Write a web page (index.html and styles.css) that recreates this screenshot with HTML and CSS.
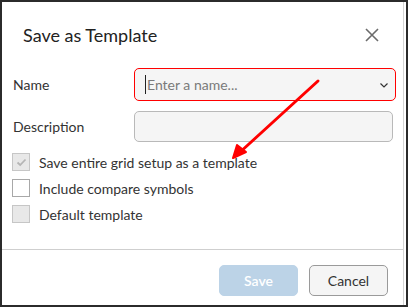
FILE: index.html
```html
<!DOCTYPE html>
<html lang="en">
<head>
    <meta charset="UTF-8">
    <title>Save as Template</title>
    <link rel="stylesheet" href="styles.css">
</head>
<body>

<div class="dialog">
    <div class="panel">
        <div class="header">
            <h2>Save as Template</h2>
            <button class="close" aria-label="Close">
                <svg width="14" height="14" viewBox="0 0 14 14"><path d="M1 1L13 13M13 1L1 13" stroke="#6b6b6b" stroke-width="1.6" fill="none"/></svg>
            </button>
        </div>

        <div class="form">
            <div class="form-row">
                <label>Name</label>
                <div class="select">
                    <span class="caret"></span>
                    <span class="placeholder">Enter a name...</span>
                    <svg class="chevron" width="8" height="5" viewBox="0 0 8 5"><path d="M0.5 0.5L4 4L7.5 0.5" stroke="#333" stroke-width="1.2" fill="none"/></svg>
                </div>
            </div>
            <div class="form-row">
                <label>Description</label>
                <input type="text" class="text-input">
            </div>
        </div>

        <div class="checks">
            <div class="check-row">
                <span class="box disabled">
                    <svg width="11" height="9" viewBox="0 0 11 9"><path d="M1.5 4.5L4.2 7L9.5 1.5" stroke="#b5b5b5" stroke-width="1.8" fill="none"/></svg>
                </span>
                <span>Save entire grid setup as a template</span>
            </div>
            <div class="check-row">
                <span class="box"></span>
                <span>Include compare symbols</span>
            </div>
            <div class="check-row">
                <span class="box disabled"></span>
                <span>Default template</span>
            </div>
        </div>

        <div class="footer">
            <button class="btn btn-primary" disabled>Save</button>
            <button class="btn btn-default">Cancel</button>
        </div>
    </div>

    <!-- annotation arrow -->
    <svg class="annotation" width="409" height="308" viewBox="0 0 409 308">
        <path d="M318 81L238 154" stroke="#f00" stroke-width="3" fill="none" stroke-linecap="round"/>
        <path d="M233 158L237 145L246 152Z" fill="#f00" stroke="#f00" stroke-width="2" stroke-linejoin="round"/>
    </svg>
</div>

</body>
</html>
```

FILE: styles.css
```css
body { margin: 0; font-family: Lato, "Open Sans", sans-serif; color: #2e2e2e; background: #fff; }
.dialog { position: relative; width: 408px; height: 307px; box-sizing: border-box; border: 2px solid #2b2b2b; background: #fff; }
.panel { width: 402px; height: 303px; box-sizing: border-box; border-right: 1px solid #d4d4d4; display: flex; flex-direction: column; }
.header { display: flex; justify-content: space-between; align-items: center; padding: 14px 24px 0 21px; height: 38px; box-sizing: content-box; }
.header h2 { margin: 0; font-size: 18px; font-weight: 400; line-height: 22px; color: #222; }
.close { border: none; background: transparent; padding: 0; width: 14px; height: 14px; cursor: pointer; display: flex; }
.form { padding: 14px 7px 0 11px; display: flex; flex-direction: column; gap: 10px; }
.form-row { display: grid; grid-template-columns: 121px 1fr; align-items: center; }
.form-row label { font-size: 14px; color: #333; }
.select { height: 33px; box-sizing: border-box; border: 1px solid #f00; border-radius: 5px; background: #f5f5f5; display: flex; align-items: center; padding: 0 7px 0 10px; }
.caret { width: 1px; height: 19px; background: #222; margin-right: 1px; }
.placeholder { flex: 1; font-size: 14px; color: #7a7a7a; }
.chevron { margin-top: 1px; }
.text-input { height: 31px; box-sizing: border-box; margin-right: 3px; border: 1px solid #b9b9b9; border-radius: 5px; background: #f5f5f5; font-family: inherit; font-size: 14px; padding: 0 10px; }
.checks { padding: 11px 0 0 10px; display: flex; flex-direction: column; gap: 8px; }
.check-row { display: flex; align-items: center; gap: 9px; font-size: 14px; color: #333; height: 18px; }
.box { width: 18px; height: 18px; box-sizing: border-box; border: 1px solid #a8a8a8; background: #fff; display: flex; align-items: center; justify-content: center; }
.box.disabled { background: #e8e8e8; border-color: #c6c6c6; }
.footer { margin-top: auto; border-top: 1px solid #cfcfcf; padding: 15px 15px 9px 0; display: flex; justify-content: flex-end; gap: 11px; }
.btn { height: 31px; width: 79px; box-sizing: border-box; border-radius: 5px; font-family: inherit; font-size: 14px; cursor: pointer; }
.btn-primary { background: #bcd3e7; border: 1px solid #bcd3e7; color: #fff; font-weight: 600; }
.btn-default { background: #f5f5f5; border: 1px solid #9a9a9a; color: #333; }
.annotation { position: absolute; left: -2px; top: -2px; pointer-events: none; }
```
